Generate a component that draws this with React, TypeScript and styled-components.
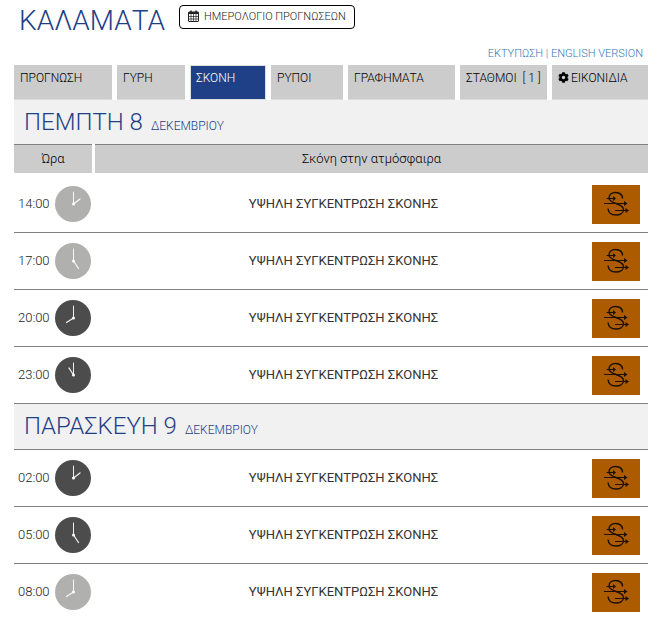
import React from "react";
import styled, { createGlobalStyle } from "styled-components";
import { FaCog } from "react-icons/fa";

const GlobalStyle = createGlobalStyle`
  *, *::before, *::after { box-sizing: border-box; }
  body {
    margin: 0;
    background: #fff;
    color: #222;
    font-family: Roboto, "Liberation Sans", sans-serif;
    font-size: 13px;
    font-weight: 300;
  }
`;

const Page = styled.main`
  padding: 4px 14px 8px;
`;

const Header = styled.header`
  display: flex;
  align-items: flex-start;
  gap: 14px;
  padding-left: 5px;
`;

const Title = styled.h1`
  margin: 0;
  font-size: 28px;
  line-height: 34px;
  font-weight: 300;
  color: #1f3f87;
`;

const CalendarButton = styled.button`
  display: inline-flex;
  align-items: center;
  gap: 5px;
  height: 24px;
  margin-top: 1px;
  padding: 0 8px 2px;
  border: 1px solid #000;
  border-radius: 4px;
  background: #fff;
  color: #222;
  font: inherit;
  font-size: 11px;
  white-space: nowrap;
  cursor: pointer;
`;

const Utilities = styled.div`
  padding: 8px 5px 3px 0;
  text-align: right;
  font-size: 11px;
  line-height: 16px;
  color: #337ab7;
`;

const UtilityLink = styled.a`
  color: inherit;
  text-decoration: none;
`;

const Tabs = styled.nav`
  display: grid;
  grid-template-columns: 98fr 68fr 76fr 72fr 107fr 87fr 96fr;
  gap: 5px;
`;

const Tab = styled.a<{ $active?: boolean }>`
  display: flex;
  gap: 2px;
  height: 35px;
  padding: 4px 0 4px 5px;
  border: 1px solid ${(p) => (p.$active ? "#ddd" : "#ccc")};
  border-bottom-color: #ddd;
  background: ${(p) => (p.$active ? "#1f3f87" : "#ccc")};
  color: ${(p) => (p.$active ? "#fff" : "#000")};
  font-size: 12px;
  line-height: 16px;
  text-decoration: none;
  white-space: pre;

  svg { margin-top: 2px; }
`;

const Forecast = styled.table`
  width: 100%;
  table-layout: fixed;
  border-collapse: separate;
  border-spacing: 0;
`;

const TimeCol = styled.col`
  width: 81px;
`;

const IconCol = styled.col`
  width: 56px;
`;

const DayCell = styled.th<{ $ruled?: boolean }>`
  height: ${(p) => (p.$ruled ? 46 : 44)}px;
  padding: 3px 10px 0;
  border-bottom: ${(p) => (p.$ruled ? "1px solid #808080" : "0")};
  background: #f1f1f1;
  color: #1f3f87;
  font-size: 24px;
  line-height: 32px;
  font-weight: 300;
  text-align: left;
`;

const Month = styled.span`
  margin-left: 8px;
  font-size: 12px;
`;

const HeadCell = styled.th`
  height: 29px;
  padding: 0;
  border-top: 1px solid #808080;
  background: #ccc;
  color: #000;
  font-weight: 300;
  line-height: 16px;
`;

const SplitHeadCell = styled(HeadCell)`
  border: 0;
  background: #fff;
`;

const HeadLabel = styled.div`
  display: grid;
  align-items: center;
  height: 29px;
  margin-right: 3px;
  border-top: 1px solid #808080;
  background: #ccc;
`;

const Spacer = styled.tbody`
  td { height: 3px; padding: 0; }
`;

const Cell = styled.td`
  height: 57px;
  padding: 0;
  border-bottom: 1px solid #808080;
  text-align: center;
  vertical-align: middle;
`;

const LastBody = styled.tbody`
  tr:last-child td { border-bottom-color: transparent; }
`;

const Hour = styled.div`
  display: flex;
  align-items: center;
  gap: 5px;
  padding-left: 4px;
`;

const HourText = styled.time`
  width: 32px;
  padding-bottom: 2px;
  text-align: left;
`;

const Level = styled.div`
  padding-bottom: 2px;
  color: #333;
  font-weight: 400;
`;

const DustBadge = styled.div`
  display: flex;
  align-items: center;
  justify-content: center;
  width: 48px;
  height: 39px;
  background: #ad5b00;
`;

const hourHands: Record<number, string> = {
  2: "M18.500 18L25 13",
  5: "M18.500 18L23.500 25.500",
  8: "M18.500 18L11.500 22.500",
  11: "M18.500 18L14 11",
};

const Clock = ({ hour }: { hour: number }) => {
  const day = hour >= 8 && hour < 18;
  return (
    <svg width="36" height="36" viewBox="0 0 36 36" aria-hidden="true">
      <circle cx="18" cy="18" r="18" fill={day ? "#b0b0ae" : "#4c4c4c"} />
      <g stroke="#fff" strokeOpacity="0.9" strokeLinecap="round">
        <path d="M18.500 18V6" />
        <path d={hourHands[hour % 12]} strokeWidth="1.3" />
      </g>
      <circle cx="18.500" cy="18" r="1.500" fill="#fff" />
    </svg>
  );
};

const CalendarIcon = () => (
  <svg width="11" height="12" viewBox="0 0 11 12" fill="none" stroke="#222" aria-hidden="true">
    <rect x="0.500" y="2" width="10" height="9.500" rx="0.500" />
    <path d="M0.500 3H10.500" strokeWidth="2" />
    <path d="M3 0.500V3M8 0.500V3" strokeWidth="1.500" />
    <path d="M3 4V11M5.500 4V11M8 4V11M0.500 6.500H10.500M0.500 9H10.500" strokeWidth="0.700" />
  </svg>
);

const DustIcon = () => (
  <svg width="26" height="28" viewBox="0 0 26 28" fill="none" stroke="#1c1000" role="img" aria-label="Σκόνη">
    <path d="M19.500 8.500C19.500 5 17 2.500 12.500 2.500C8.500 2.500 6 5 6 8C6 14 20.500 13 20.500 19.500C20.500 23 17 25 13 25C8 25 5.500 23 5 18.500" strokeWidth="1.400" />
    <path d="M3.500 8.500H11M1 13.500H23M12 20.500H24" />
    <path d="M10 6L13 8.500L10 11ZM21 11L24.500 13.500L21 16ZM22.500 18L26 20.500L22.500 23Z" fill="#1c1000" stroke="none" />
  </svg>
);

const DayRow = ({ day, month, ruled }: { day: string; month: string; ruled?: boolean }) => (
  <tr>
    <DayCell colSpan={3} $ruled={ruled}>
      {day}
      <Month>{month}</Month>
    </DayCell>
  </tr>
);

const HourRow = ({ hour }: { hour: number }) => (
  <tr>
    <Cell>
      <Hour>
        <HourText>{String(hour).padStart(2, "0")}:00</HourText>
        <Clock hour={hour} />
      </Hour>
    </Cell>
    <Cell><Level>ΥΨΗΛΗ ΣΥΓΚΕΝΤΡΩΣΗ ΣΚΟΝΗΣ</Level></Cell>
    <Cell><DustBadge><DustIcon /></DustBadge></Cell>
  </tr>
);

export default function App() {
  return (
    <Page>
      <GlobalStyle />
      <Header>
        <Title>ΚΑΛΑΜΑΤΑ</Title>
        <CalendarButton type="button"><CalendarIcon />ΗΜΕΡΟΛΟΓΙΟ ΠΡΟΓΝΩΣΕΩΝ</CalendarButton>
      </Header>
      <Utilities>
        <UtilityLink href="#print">ΕΚΤΥΠΩΣΗ</UtilityLink> | <UtilityLink href="#en">ENGLISH VERSION</UtilityLink>
      </Utilities>
      <Tabs>
        <Tab href="#forecast">ΠΡΟΓΝΩΣΗ</Tab>
        <Tab href="#pollen">ΓΥΡΗ</Tab>
        <Tab href="#dust" $active aria-current="page">ΣΚΟΝΗ</Tab>
        <Tab href="#pollutants">ΡΥΠΟΙ</Tab>
        <Tab href="#charts">ΓΡΑΦΗΜΑΤΑ</Tab>
        <Tab href="#stations">{"ΣΤΑΘΜΟΙ  [ 1 ]"}</Tab>
        <Tab href="#icons"><FaCog size={11} />ΕΙΚΟΝΙΔΙΑ</Tab>
      </Tabs>
      <Forecast>
        <colgroup><TimeCol /><col /><IconCol /></colgroup>
        <tbody>
          <DayRow day="ΠΕΜΠΤΗ 8" month="ΔΕΚΕΜΒΡΙΟΥ" />
          <tr>
            <SplitHeadCell scope="col"><HeadLabel>Ώρα</HeadLabel></SplitHeadCell>
            <HeadCell scope="col" colSpan={2}>Σκόνη στην ατμόσφαιρα</HeadCell>
          </tr>
        </tbody>
        <Spacer><tr><td colSpan={3} /></tr></Spacer>
        <tbody>
          {[14, 17, 20, 23].map((h) => <HourRow key={h} hour={h} />)}
        </tbody>
        <LastBody>
          <DayRow day="ΠΑΡΑΣΚΕΥΗ 9" month="ΔΕΚΕΜΒΡΙΟΥ" ruled />
          {[2, 5, 8].map((h) => <HourRow key={h} hour={h} />)}
        </LastBody>
      </Forecast>
    </Page>
  );
}
